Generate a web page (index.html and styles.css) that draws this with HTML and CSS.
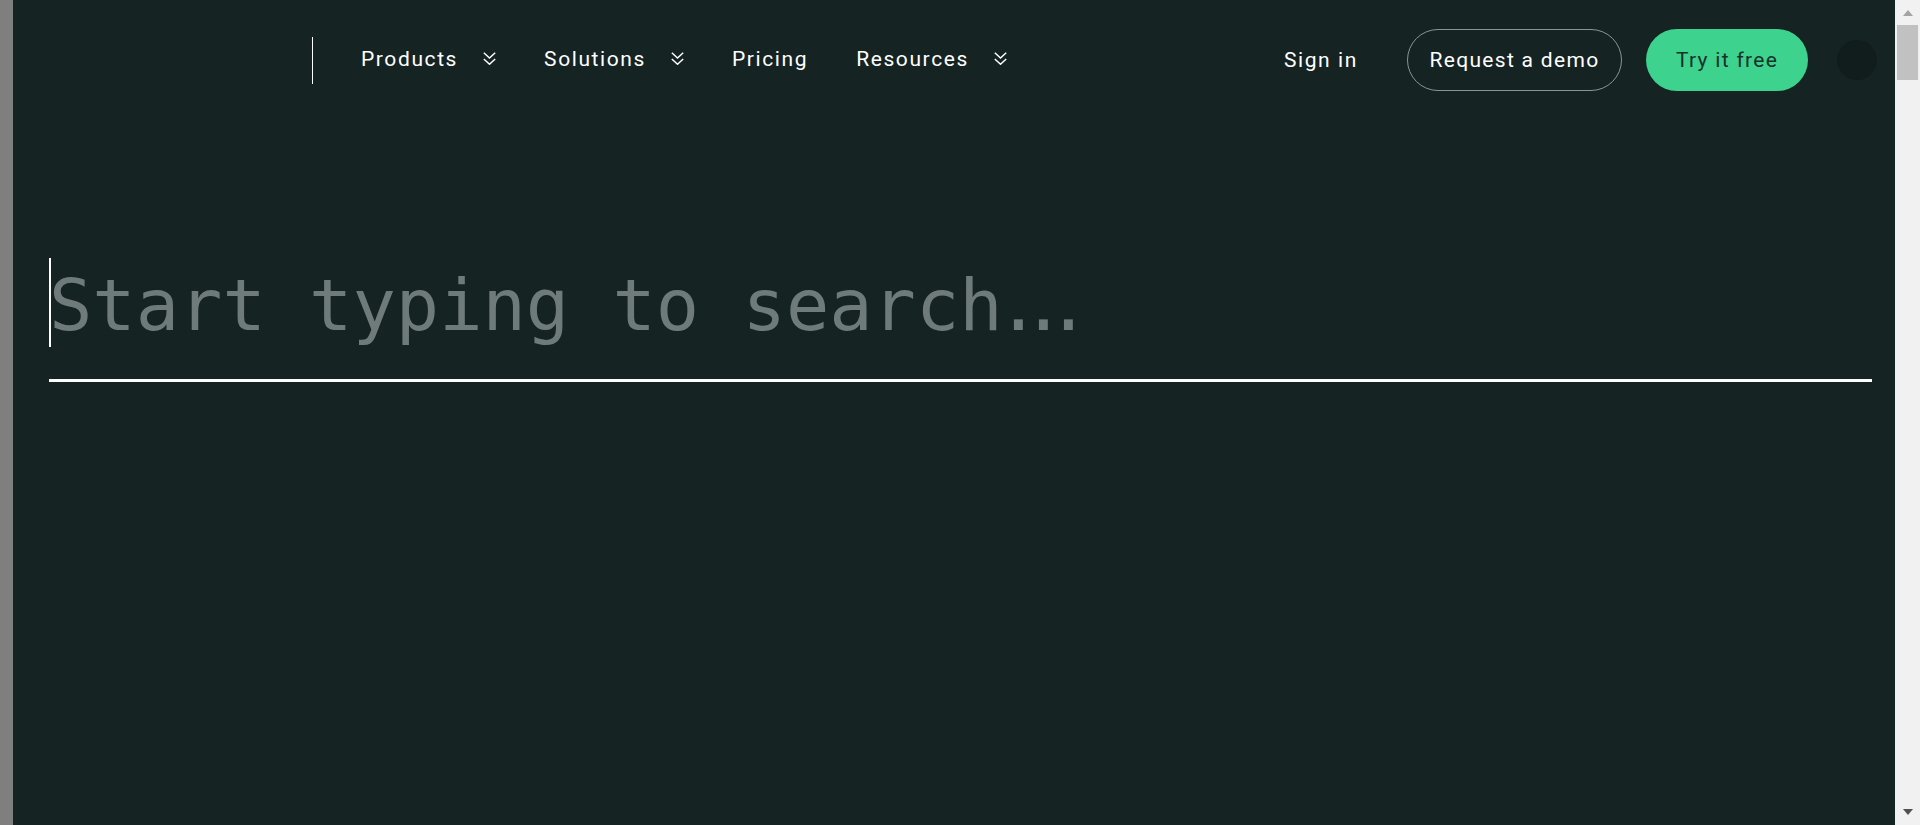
FILE: index.html
```html
<!DOCTYPE html>
<html lang="en">
<head>
<meta charset="utf-8">
<title>Search</title>
<link rel="stylesheet" href="styles.css">
</head>
<body>
<div class="page">
  <div class="edge"></div>
  <div class="main">
    <header class="header">
      <div class="brand"></div>
      <div class="divider"></div>
      <nav class="nav">
        <a class="nav-item">Products
          <svg class="chev" width="13" height="13" viewBox="0 0 13 13"><path d="M0.8 0.8 L6.5 6 L12.2 0.8 M0.8 7 L6.5 12.2 L12.2 7" fill="none" stroke="#fff" stroke-width="1.5"/></svg>
        </a>
        <a class="nav-item">Solutions
          <svg class="chev" width="13" height="13" viewBox="0 0 13 13"><path d="M0.8 0.8 L6.5 6 L12.2 0.8 M0.8 7 L6.5 12.2 L12.2 7" fill="none" stroke="#fff" stroke-width="1.5"/></svg>
        </a>
        <a class="nav-item">Pricing</a>
        <a class="nav-item">Resources
          <svg class="chev" width="13" height="13" viewBox="0 0 13 13"><path d="M0.8 0.8 L6.5 6 L12.2 0.8 M0.8 7 L6.5 12.2 L12.2 7" fill="none" stroke="#fff" stroke-width="1.5"/></svg>
        </a>
      </nav>
      <div class="actions">
        <a class="signin">Sign in</a>
        <a class="btn btn-outline">Request a demo</a>
        <a class="btn btn-green">Try it free</a>
        <div class="avatar"></div>
      </div>
    </header>
    <section class="search">
      <div class="field">
        <span class="caret"></span>
        <span class="placeholder">Start typing to search<span class="dots">...</span></span>
      </div>
      <div class="underline"></div>
    </section>
  </div>
  <div class="scrollbar">
    <div class="sb-up"><span class="tri-up"></span></div>
    <div class="sb-thumb"></div>
    <div class="sb-track"></div>
    <div class="sb-down"><span class="tri-down"></span></div>
  </div>
</div>
</body>
</html>
```

FILE: styles.css
```css
html, body {
  margin: 0;
  padding: 0;
  height: 100%;
  overflow: hidden;
}

body {
  font-family: Roboto, "Liberation Sans", sans-serif;
  background: #152323;
}

.page {
  display: flex;
  height: 825px;
}

.edge {
  width: 13px;
  flex: none;
  background: #7f7f7f;
}

.main {
  flex: 1;
  background: #152323;
  display: flex;
  flex-direction: column;
}

/* header */
.header {
  height: 120px;
  display: flex;
  align-items: center;
  padding-right: 18px;
}

.brand {
  width: 299px;
  height: 40px;
  flex: none;
}

.divider {
  width: 1px;
  height: 47px;
  background: #ffffff;
  flex: none;
}

.nav {
  display: flex;
  align-items: center;
  gap: 48px;
  margin-left: 48px;
  margin-top: -3px;
}

.nav-item {
  display: flex;
  align-items: center;
  color: #ffffff;
  font-size: 21px;
  font-weight: 400;
  letter-spacing: 1.6px;
}

.chev {
  margin-left: 25px;
  display: block;
}

.actions {
  margin-left: auto;
  display: flex;
  align-items: center;
}

.signin {
  color: #ffffff;
  font-size: 21px;
  font-weight: 400;
  letter-spacing: 1.6px;
  margin-right: 49px;
}

.btn {
  height: 62px;
  box-sizing: border-box;
  border-radius: 31px;
  display: flex;
  align-items: center;
  justify-content: center;
  font-size: 21px;
  letter-spacing: 1.3px;
}

.btn-outline {
  width: 215px;
  border: 1px solid #8b9494;
  color: #ffffff;
  font-weight: 400;
}

.btn-green {
  width: 162px;
  margin-left: 24px;
  background: #3dd28d;
  color: #173129;
  font-weight: 400;
}

.avatar {
  width: 40px;
  height: 40px;
  border-radius: 50%;
  background: #111d1d;
  margin-left: 29px;
}

/* search */
.search {
  margin-top: 138px;
  padding: 0 23px 0 36px;
}

.field {
  display: flex;
  align-items: flex-start;
  height: 89px;
}

.caret {
  width: 2px;
  height: 89px;
  background: #ffffff;
  flex: none;
}

.placeholder {
  font-family: "DejaVu Sans Mono", "Liberation Mono", monospace;
  font-size: 72px;
  line-height: 89px;
  color: #6f7b7b;
  margin-left: -2px;
  margin-top: 3px;
  white-space: nowrap;
}

.dots {
  letter-spacing: -18.3px;
  margin-left: -6px;
}

.underline {
  height: 3px;
  background: #ffffff;
  margin-top: 32px;
}

/* scrollbar */
.scrollbar {
  width: 25px;
  flex: none;
  background: #f1f1f1;
  display: flex;
  flex-direction: column;
}

.sb-up {
  height: 25px;
  box-sizing: border-box;
  padding-top: 10px;
  display: flex;
  justify-content: center;
}

.tri-up {
  width: 0;
  height: 0;
  border-left: 5.5px solid transparent;
  border-right: 5.5px solid transparent;
  border-bottom: 6px solid #a3a3a3;
}

.sb-thumb {
  height: 55px;
  margin: 0 2px;
  background: #c1c1c1;
}

.sb-track {
  flex: 1;
}

.sb-down {
  height: 25px;
  box-sizing: border-box;
  padding-top: 9px;
  display: flex;
  justify-content: center;
}

.tri-down {
  width: 0;
  height: 0;
  border-left: 5.5px solid transparent;
  border-right: 5.5px solid transparent;
  border-top: 6px solid #505050;
}
```
